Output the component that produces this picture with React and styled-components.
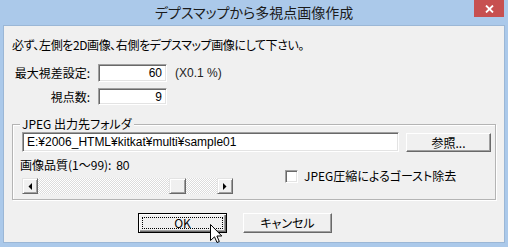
import React from 'react';
import styled, { createGlobalStyle } from 'styled-components';

const GlobalStyle = createGlobalStyle`
  body {
    margin: 0;
    font-family: "Noto Sans CJK JP", "Liberation Sans", sans-serif;
    color: #000;
  }
`;

const Window = styled.div`
  position: relative;
  width: 508px;
  height: 247px;
  background: #abc9ea;
  display: flex;
  flex-direction: column;
  box-sizing: border-box;
  overflow: hidden;
`;

const TitleBar = styled.div`
  height: 25px;
  flex: none;
  display: grid;
  grid-template-columns: 1fr auto 1fr;
  align-items: start;
`;

const Title = styled.div`
  grid-column: 2;
  font-size: 14px;
  line-height: 24px;
  font-feature-settings: "palt";
  color: #1b1b1b;
`;

const CloseButton = styled.div`
  grid-column: 3;
  justify-self: end;
  margin-right: 4px;
  width: 30px;
  height: 17px;
  background: #c75050;
  display: flex;
  align-items: center;
  justify-content: center;
`;

const Body = styled.div`
  flex: 1;
  margin: 0 3px 4px;
  background: #f0f0f0;
  border: 1px solid #9bb7d6;
  padding: 12px 0 0 8px;
  font-size: 12px;
  line-height: 14px;
`;

const Note = styled.div`
  font-feature-settings: "palt";
  letter-spacing: -0.4px;
  height: 14px;
`;

const ParamGrid = styled.div`
  margin-top: 12px;
  display: grid;
  grid-template-columns: 78px 69px auto;
  grid-template-rows: 18px 17px;
  column-gap: 8px;
  row-gap: 6px;
  align-items: center;
`;

const Label = styled.div`
  text-align: right;
`;

const Hint = styled.div`
  font-family: "Liberation Sans", sans-serif;
  font-size: 12px;
  color: #222;
`;

const Field = styled.div`
  box-sizing: border-box;
  height: ${p => p.$h || 18}px;
  width: ${p => (p.$w ? `${p.$w}px` : 'auto')};
  background: #fff;
  border: 1px solid;
  border-color: #a0a0a0 #fff #fff #a0a0a0;
  box-shadow: inset 1px 1px #696969, inset -1px -1px #e3e3e3;
  font-family: "Liberation Sans", "Noto Sans CJK JP", sans-serif;
  font-size: 12px;
  line-height: ${p => (p.$h || 18) - 3}px;
  padding: 1px 4px 0;
  text-align: ${p => p.$align || 'left'};
  white-space: nowrap;
  overflow: hidden;
`;

const Group = styled.fieldset`
  box-sizing: border-box;
  width: 484px;
  margin: 12px 0 0;
  border: 1px solid #b4b4b4;
  box-shadow: 1px 1px #fff, inset 1px 1px #fff;
  padding: 1px 4px 5px 9px;
  min-width: 0;
`;

const Legend = styled.legend`
  padding: 0 2px;
  margin-left: -2px;
  font-size: 12px;
  line-height: 14px;
  background: #f0f0f0;
  font-feature-settings: "palt";
`;

const PathRow = styled.div`
  display: flex;
  align-items: flex-start;
  gap: 7px;
`;

const Button = styled.div`
  box-sizing: border-box;
  width: ${p => p.$w}px;
  height: ${p => p.$h}px;
  margin-top: ${p => p.$top || 0}px;
  position: relative;
  background: #f0f0f0;
  display: flex;
  align-items: center;
  justify-content: center;
  font-size: 12px;
  font-feature-settings: "palt";
  border: 1px solid;
  border-color: ${p => (p.$default ? '#000' : '#fff #696969 #696969 #fff')};
  box-shadow: ${p =>
    p.$default
      ? 'inset 1px 1px #fff, inset -1px -1px #696969, inset -2px -2px #a0a0a0'
      : 'inset -1px -1px #a0a0a0, inset 1px 1px #f0f0f0'};
  ${p =>
    p.$default &&
    `&::after {
      content: '';
      position: absolute;
      inset: 3px;
      border: 1px dotted #000;
    }`}
`;

const QualityGrid = styled.div`
  margin-top: 6px;
  display: grid;
  grid-template-columns: 211px 1fr;
  grid-template-rows: 14px 16px;
  row-gap: 6px;
`;

const QualityLabel = styled.div`
  margin-left: -2px;
  white-space: nowrap;
`;

const Num = styled.span`
  font-family: "Liberation Sans", sans-serif;
  font-size: 12px;
  margin-left: 2px;
`;

const Scrollbar = styled.div`
  grid-column: 1;
  grid-row: 2;
  display: flex;
  height: 16px;
`;

const Arrow = styled.div`
  box-sizing: border-box;
  width: 16px;
  height: 16px;
  flex: none;
  background: #f0f0f0;
  border: 1px solid;
  border-color: #e3e3e3 #696969 #696969 #e3e3e3;
  box-shadow: inset 1px 1px #fff, inset -1px -1px #a0a0a0;
  display: flex;
  align-items: center;
  justify-content: center;
`;

const Track = styled.div`
  flex: 1;
  display: flex;
  background-color: #fff;
  background-image: conic-gradient(#dcdcdc 25%, #fff 0 50%, #dcdcdc 0 75%, #fff 0);
  background-size: 2px 2px;
`;

const Thumb = styled(Arrow)`
  width: 17px;
`;

const CheckCell = styled.div`
  grid-column: 2;
  grid-row: 1 / span 2;
  align-self: end;
  margin-bottom: 11px;
  padding-left: 52px;
  display: flex;
  align-items: center;
  gap: 6px;
  font-feature-settings: "palt";
`;

const Box = styled.div`
  box-sizing: border-box;
  width: 13px;
  height: 13px;
  background: #fff;
  border: 1px solid;
  border-color: #a0a0a0 #fff #fff #a0a0a0;
  box-shadow: inset 1px 1px #696969, inset -1px -1px #e3e3e3;
`;

const ButtonRow = styled.div`
  display: flex;
  gap: 16px;
  margin: 13px 0 0 126px;
`;

const Cursor = styled.svg`
  position: absolute;
  left: 210px;
  top: 224px;
`;

const Tri = ({ dir }) => (
  <svg width="4" height="7" viewBox="0 0 4 7">
    <polygon points={dir === 'left' ? '4,0 4,7 0.5,3.5' : '0,0 0,7 3.5,3.5'} fill="#000" />
  </svg>
);

const quality = 80;
const trackLen = 179;
const thumbW = 17;

export default function App() {
  const thumbLeft = Math.round(((quality - 1) / 98) * (trackLen - thumbW));
  return (
    <>
      <GlobalStyle />
      <Window>
        <TitleBar>
          <Title>デプスマップから多視点画像作成</Title>
          <CloseButton>
            <svg width="9" height="8" viewBox="0 0 9 8">
              <path d="M1 0.5 L8 7.5 M8 0.5 L1 7.5" stroke="#fff" strokeWidth="1.8" />
            </svg>
          </CloseButton>
        </TitleBar>
        <Body>
          <Note>必ず、左側を2D画像、右側をデプスマップ画像にして下さい。</Note>
          <ParamGrid>
            <Label>最大視差設定:</Label>
            <Field $align="right">60</Field>
            <Hint>(X0.1 %)</Hint>
            <Label>視点数:</Label>
            <Field $align="right" $h={17}>9</Field>
          </ParamGrid>
          <Group>
            <Legend>JPEG 出力先フォルダ</Legend>
            <PathRow>
              <Field $w={377} $h={20}>E:¥2006_HTML¥kitkat¥multi¥sample01</Field>
              <Button $w={85} $h={19} $top={1}>参照...</Button>
            </PathRow>
            <QualityGrid>
              <QualityLabel>画像品質(1〜99): <Num>{quality}</Num></QualityLabel>
              <Scrollbar>
                <Arrow><Tri dir="left" /></Arrow>
                <Track>
                  <Thumb style={{ marginLeft: thumbLeft }} />
                </Track>
                <Arrow><Tri dir="right" /></Arrow>
              </Scrollbar>
              <CheckCell>
                <Box />
                <span>JPEG圧縮によるゴースト除去</span>
              </CheckCell>
            </QualityGrid>
          </Group>
          <ButtonRow>
            <Button $w={89} $h={20} $default>OK</Button>
            <Button $w={89} $h={20}>キャンセル</Button>
          </ButtonRow>
        </Body>
        <Cursor width="13" height="20" viewBox="0 0 13 20">
          <path d="M0.5 0.5 L0.5 16.5 L4.5 12.8 L7 18.5 L9.3 17.5 L6.9 12 L11.8 12 Z" fill="#fff" stroke="#000" strokeWidth="1" strokeLinejoin="miter" />
        </Cursor>
      </Window>
    </>
  );
}
